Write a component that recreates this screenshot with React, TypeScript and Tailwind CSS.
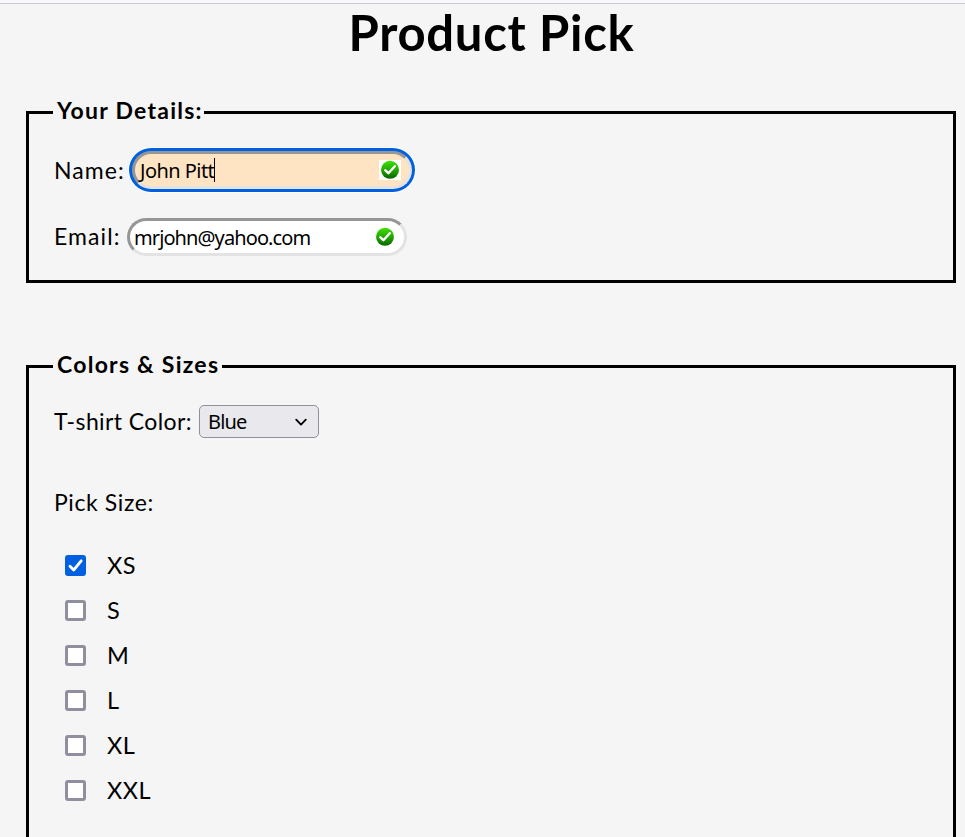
import React from 'react';

const sizes = ['XS', 'S', 'M', 'L', 'XL', 'XXL'];

function ValidMark() {
  return (
    <svg width="20" height="20" viewBox="0 0 20 20" className="block">
      <defs>
        <linearGradient id="valid-green" x1="0" y1="0" x2="0" y2="1">
          <stop offset="0" stopColor="#3fe000" />
          <stop offset="0.45" stopColor="#24b000" />
          <stop offset="1" stopColor="#0b6400" />
        </linearGradient>
      </defs>
      <circle cx="10" cy="9.8" r="9" fill="url(#valid-green)" />
      <path d="M5.2 10.2 8.4 13.2 14.8 6.2" fill="none" stroke="#fff" strokeWidth="2.4" strokeLinecap="round" strokeLinejoin="round" />
    </svg>
  );
}

function Checkbox({ checked }: { checked: boolean }) {
  if (checked) {
    return (
      <span className="flex h-[21px] w-[21px] items-center justify-center rounded-[3px] bg-[#0060df]">
        <svg width="21" height="21" viewBox="0 0 21 21">
          <path d="M5 11.2 8.7 15 16.2 5.8" fill="none" stroke="#fff" strokeWidth="2.8" strokeLinecap="round" strokeLinejoin="round" />
        </svg>
      </span>
    );
  }
  return <span className="block h-[21px] w-[21px] rounded-[3px] border-[3px] border-[#8f8f9d] bg-white" />;
}

export default function App() {
  return (
    <div className="h-[837px] w-full overflow-hidden bg-[#f5f5f5] font-['Lato',sans-serif] text-[23px] leading-[30px] text-black">
      <div className="h-[4px] border-b border-[#c8c8ce] bg-[#f9f9fb]" />
      <h1 className="flex h-[60px] items-center justify-center pb-[4px] pl-[18px] text-[49px] leading-[56px] font-bold tracking-[0.7px]">
        <span className="whitespace-nowrap">Product Pick</span>
      </h1>

      <fieldset className="mt-[32px] ml-[26px] h-[187px] w-[930px] border-[3px] border-black px-6">
        <legend className="h-[33px] w-[151px] px-1 text-[23px] leading-[28px] font-bold tracking-[1.25px] whitespace-nowrap">Your Details:</legend>
        <div className="mt-[22px] flex h-[38px] items-center pl-[1px]">
          <label className="w-[78px] tracking-[1.1px] whitespace-nowrap">Name:</label>
          <div className="flex h-[38px] w-[280px] items-center rounded-full border-[3px] border-t-[#969696] border-r-[#e3e3e3] border-b-[#e3e3e3] border-l-[#969696] bg-[#ffe4c4] pl-[5px] font-['Noto_Sans',sans-serif] text-[20px] shadow-[0_0_0_3px_#0060df,0_0_0_4px_#ffffff]">
            <span className="pt-[2px] tracking-[-0.55px] whitespace-nowrap">John Pitt</span>
            <span className="h-[24px] w-px bg-black" />
            <span className="mr-[8px] ml-auto flex h-[20px] w-[22px] items-center justify-center bg-white">
              <ValidMark />
            </span>
          </div>
        </div>
        <div className="mt-[29px] flex h-[38px] items-center pl-[1px]">
          <label className="w-[73px] pb-[2px] tracking-[1.1px] whitespace-nowrap">Email:</label>
          <div className="flex h-[38px] w-[280px] items-center rounded-full border-[3px] border-t-[#969696] border-r-[#e3e3e3] border-b-[#e3e3e3] border-l-[#969696] bg-white pl-[4px] font-['Noto_Sans',sans-serif] text-[20px]">
            <span className="pt-[2px] tracking-[-0.9px] whitespace-nowrap">mrjohn@yahoo.com</span>
            <span className="mr-[9px] ml-auto">
              <ValidMark />
            </span>
          </div>
        </div>
      </fieldset>

      <fieldset className="mt-[67px] ml-[26px] h-[600px] w-[930px] border-[3px] border-black px-6">
        <legend className="h-[33px] w-[169px] px-1 text-[23px] leading-[29px] font-bold tracking-[1.25px] whitespace-nowrap">Colors &amp; Sizes</legend>
        <div className="mt-[22px] flex h-[33px] items-center pl-[1px]">
          <label className="w-[145px] pb-[2px] tracking-[0.4px] whitespace-nowrap">T-shirt Color:</label>
          <div className="flex h-[33px] w-[120px] items-center justify-between rounded-[5px] border border-[#8f8f9d] bg-[#e9e9ed] pr-[11px] pl-[8px] font-['Noto_Sans',sans-serif] text-[20px]">
            <span className="tracking-[-0.8px]">Blue</span>
            <svg width="12" height="8" viewBox="0 0 12 8">
              <path d="M1.2 1.6 6 6.6 10.8 1.6" fill="none" stroke="#000" strokeWidth="1.8" strokeLinecap="round" strokeLinejoin="round" />
            </svg>
          </div>
        </div>
        <p className="mt-[49px] mb-[26px] pl-[1px] leading-[30px] tracking-[0.6px]">Pick Size:</p>
        <ul className="pl-[12px]">
          {sizes.map((size, i) => (
            <li key={size} className="flex h-[45px] items-center gap-[21px]">
              <Checkbox checked={i === 0} />
              <span className="pb-[2px] text-[23.5px] tracking-[0.5px]">{size}</span>
            </li>
          ))}
        </ul>
      </fieldset>
    </div>
  );
}
